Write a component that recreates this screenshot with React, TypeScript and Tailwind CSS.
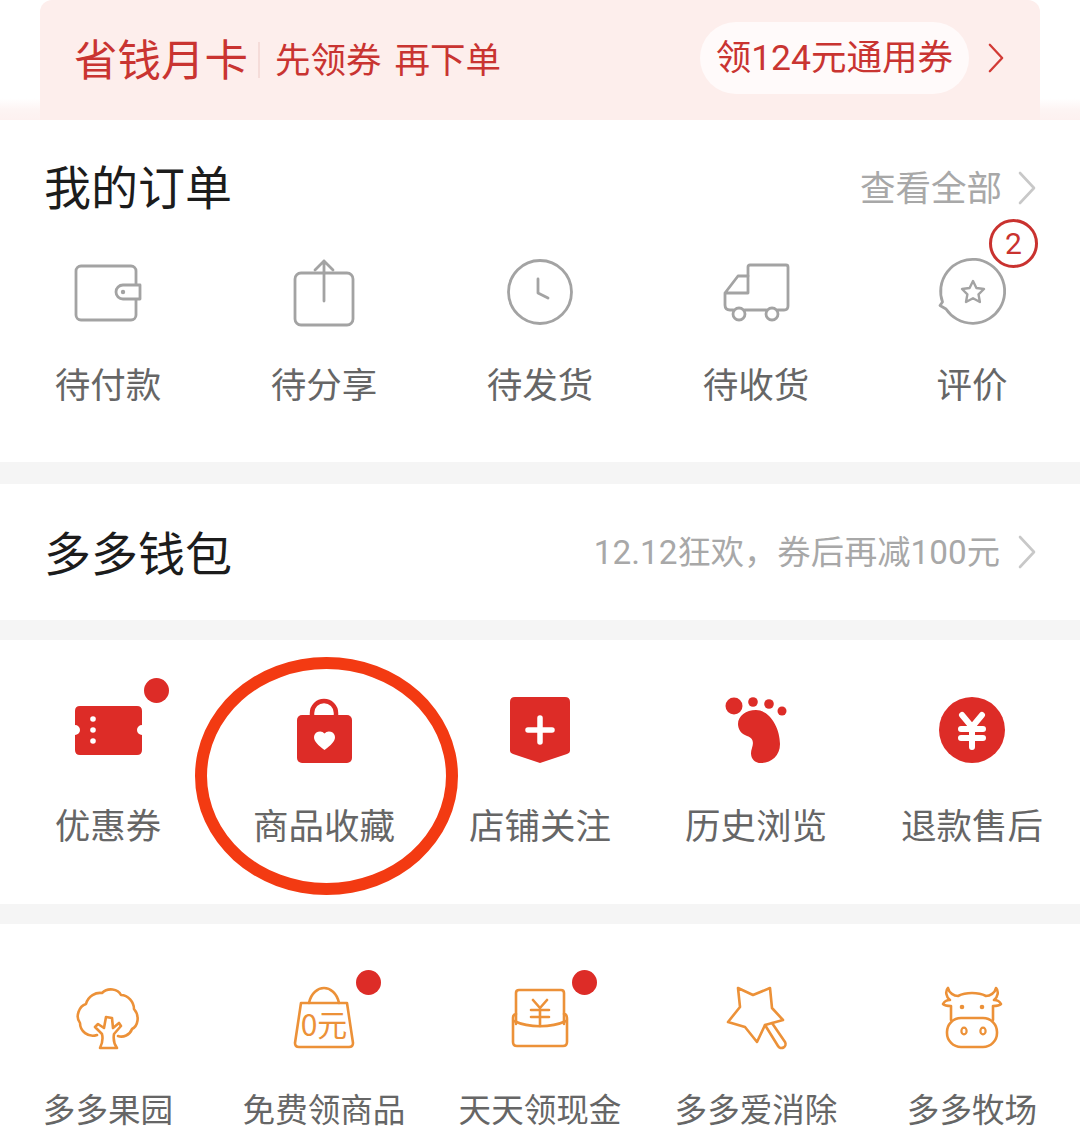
import type { ReactNode } from "react";

const grayIcon = { fill: "none", stroke: "#a3a3a3", strokeWidth: 2.8, strokeLinecap: "round", strokeLinejoin: "round" } as const;
const ORANGE = "#ec9138";
const orangeIcon = { fill: "none", stroke: ORANGE, strokeWidth: 2.6, strokeLinecap: "round", strokeLinejoin: "round" } as const;
const RED = "#dd2c27";

function Svg({ children }: { children: ReactNode }) {
  return (
    <svg viewBox="0 0 72 72" className="w-[72px] h-[72px] block overflow-visible">
      {children}
    </svg>
  );
}

const Wallet = () => (
  <Svg>
    <g {...grayIcon}>
      <rect x="4" y="10" width="60" height="54" rx="5" />
      <path d="M68 29H51a7 7 0 0 0 0 14H68Z" fill="#fff" />
    </g>
    <circle cx="51" cy="36" r="2.2" fill="#a3a3a3" />
  </Svg>
);
const Share = () => (
  <Svg>
    <g {...grayIcon}>
      <rect x="7" y="17" width="58" height="52" rx="6" />
      <path d="M36 45V5M27 14l9-9 9 9" />
    </g>
  </Svg>
);
const Clock = () => (
  <Svg>
    <g {...grayIcon}>
      <circle cx="36" cy="36" r="31.5" />
      <path d="M34 23V37L44 42" />
    </g>
  </Svg>
);
const Truck = () => (
  <Svg>
    <g {...grayIcon}>
      <path d="M28 36V11q0-2 2-2H66q2 0 2 2V50q0 4-4 4H58" />
      <path d="M28 20H18L5 37V49q0 5 5 5h3M5 37H28" />
      <path d="M25 54H46" />
      <circle cx="19" cy="58" r="6" />
      <circle cx="52" cy="58" r="6" />
    </g>
  </Svg>
);
const Review = () => (
  <Svg>
    <g {...grayIcon}>
      <path d="M6.500 46A32 32 0 1 1 10 53L4 49.500Z" />
      <path d="M37 25l3.400 7 7.600 1-5.500 5.300 1.400 7.700-6.900-3.700L30 46l1.400-7.700L26 33l7.600-1Z" strokeWidth="2.400" />
    </g>
  </Svg>
);

const Ticket = () => (
  <Svg>
    <path d="M8 12H65q5 0 5 5V31a5 5 0 0 0 0 10V56q0 5-5 5H8q-5 0-5-5V41a5 5 0 0 0 0-10V17q0-5 5-5Z" fill={RED} />
    <circle cx="21" cy="25" r="2.800" fill="#fff" />
    <circle cx="21" cy="36" r="2.800" fill="#fff" />
    <circle cx="21" cy="47" r="2.800" fill="#fff" />
  </Svg>
);
const HeartBag = () => (
  <Svg>
    <path d="M24 24V19a12 12 0 0 1 24 0V24" fill="none" stroke={RED} strokeWidth="4.500" />
    <rect x="9" y="21" width="55" height="48" rx="5" fill={RED} />
    <path d="M36.500 56C30 51 26 47.500 26 43a6 6 0 0 1 10.500-3.500A6 6 0 0 1 47 43c0 4.500-4 8-10.500 13Z" fill="#fff" />
  </Svg>
);
const Shield = () => (
  <Svg>
    <path d="M11 3H61q5 0 5 5V57q0 2-3 3L36 69 9 60q-3-1-3-3V8q0-5 5-5Z" fill={RED} />
    <path d="M36 24V48M24 36H48" stroke="#fff" strokeWidth="5.500" strokeLinecap="round" />
  </Svg>
);
const Foot = () => (
  <Svg>
    <circle cx="14" cy="12" r="8.500" fill={RED} />
    <circle cx="33" cy="8" r="4.800" fill={RED} />
    <circle cx="49" cy="10" r="4.800" fill={RED} />
    <circle cx="62" cy="17" r="4.500" fill={RED} />
    <path d="M36 16C50 16 60 34 60 50C60 62 51 69 41 69C33 69 29 62 32 54C34 48 33 44 27 42C21 40 18 35 18 30C18 22 26 16 36 16Z" fill={RED} />
  </Svg>
);
const Refund = () => (
  <Svg>
    <circle cx="36" cy="36" r="33" fill={RED} />
    <path d="M26 21L36 33L46 21M25 35H47M25 44H47M36 33V53" fill="none" stroke="#fff" strokeWidth="6" strokeLinecap="round" strokeLinejoin="round" />
  </Svg>
);

const Tree = () => (
  <Svg>
    <g {...orangeIcon}>
      <path d="M25 53C16 56 8 49 8 41C3 35 7 24 14 22C16 14 24 10 30 11C36 5 46 7 49 13C56 13 62 20 62 27C68 34 66 44 60 47C58 53 51 56 46 54" />
      <path d="M28 66C31 60 31 56 30 52L23 45L26 42L32 46L34 35L40 36L41 46L47 41L49 44L42 52C41 58 42 62 45 66Z" />
    </g>
  </Svg>
);
const ZeroBag = () => (
  <Svg>
    <g {...orangeIcon}>
      <path d="M13 21H59L65 61q0 4-4 4H11q-4 0-4-4Z" />
      <path d="M21 21C23 11 30 6 36 6C42 6 49 11 51 21" />
    </g>
    <text x="36" y="54" textAnchor="middle" fontSize="30" fill={ORANGE} className="font-['Noto_Sans_CJK_SC',sans-serif]">
      0元
    </text>
  </Svg>
);
const Cash = () => (
  <Svg>
    <g {...orangeIcon}>
      <path d="M12 42V11q0-3 3-3H57q3 0 3 3V42" />
      <path d="M12 32C9 32 9 35 9 37V60q0 4 4 4H59q4 0 4-4V37C63 35 63 32 60 32" />
      <path d="M10 39C25 46 47 46 62 39" />
      <path d="M29 18L36 26L43 18M27 28H45M27 35H45M36 26V44" />
    </g>
  </Svg>
);
const Wand = () => (
  <Svg>
    <g {...orangeIcon}>
      <path d="M18 6L33 13L50 6L52 26L63 38L45 43L37 60L25 45L8 40L20 25Z" />
      <path d="M45 43L58 64a3.500 3.500 0 0 0 7-4L52 41" />
    </g>
  </Svg>
);
const Cow = () => (
  <Svg>
    <g {...orangeIcon}>
      <rect x="11" y="36" width="50" height="29" rx="14" />
      <path d="M15 38V24C12 24 9 24 7 22C8 20 10 18 14 18C10 15 9 9 12 6C13 11 18 14 22 14C30 10 42 10 50 14C54 14 59 11 60 6C63 9 62 15 58 18C62 18 64 20 65 22C63 24 60 24 57 24V38" />
      <ellipse cx="28" cy="49" rx="2.600" ry="3.400" strokeWidth="2.200" />
      <ellipse cx="47" cy="49" rx="2.600" ry="3.400" strokeWidth="2.200" />
    </g>
    <circle cx="26" cy="25" r="2.300" fill={ORANGE} />
    <circle cx="46" cy="25" r="2.300" fill={ORANGE} />
  </Svg>
);

const Chevron = ({ color = "#c8c8c8", className = "w-[18px] h-[34px]" }: { color?: string; className?: string }) => (
  <svg viewBox="0 0 18 34" className={className} fill="none" stroke={color} strokeWidth="2.600" strokeLinecap="round" strokeLinejoin="round">
    <path d="M2 2L16 17L2 32" />
  </svg>
);

const Dot = () => <span className="absolute left-[68px] top-[-12px] w-[25px] h-[25px] rounded-full bg-[#dd2c27]" />;

function Cell({ icon, label, badge, labelClass }: { icon: ReactNode; label: string; badge?: ReactNode; labelClass: string }) {
  return (
    <div className="flex flex-col items-center">
      <div className="relative w-[72px] h-[72px]">
        {icon}
        {badge}
      </div>
      <div className={labelClass}>{label}</div>
    </div>
  );
}

const ORDER_LABEL = "mt-[34px] h-[48px] leading-[48px] text-[35.500px] text-[#666] whitespace-nowrap";
const TOOL_LABEL = "mt-[37px] h-[48px] leading-[48px] text-[35.500px] text-[#666] whitespace-nowrap";
const GAME_LABEL = "mt-[35px] h-[44px] leading-[44px] text-[32.600px] text-[#666] whitespace-nowrap";

export default function App() {
  return (
    <div className="relative w-[1080px] h-[1138px] overflow-hidden bg-[#f5f5f5] font-['Roboto','Noto_Sans_CJK_SC','Liberation_Sans',sans-serif]">
      {/* Banner */}
      <div className="h-[120px] px-[40px] bg-[linear-gradient(to_bottom,#ffffff_82%,#fdf4f3_92%,#fdf1f0_100%)]">
        <div className="h-full rounded-t-[12px] bg-[#fdeeec] flex items-center pl-[34px] pr-[36px] text-[#c93431]">
          <span className="mt-[3px] text-[43.500px] leading-none whitespace-nowrap">省钱月卡</span>
          <span className="w-[2px] h-[36px] bg-[#f5dcd9] ml-[10px] mr-[15px]" />
          <span className="mt-[3px] flex gap-[13px] text-[35.500px] leading-none whitespace-nowrap">
            <span>先领券</span>
            <span>再下单</span>
          </span>
          <span className="ml-auto flex items-center gap-[19px] mb-[4px]">
            <span className="h-[72px] pt-[2px] px-[16px] rounded-full bg-[#fffafa] flex items-center text-[35.500px] whitespace-nowrap">
              领124元通用券
            </span>
            <Chevron color="#d23a35" className="w-[16px] h-[30px]" />
          </span>
        </div>
      </div>

      {/* Orders */}
      <section className="h-[342px] bg-white">
        <div className="pt-[39px] h-[99px] pl-[44px] pr-[44px] flex items-center justify-between">
          <span className="text-[47px] leading-[60px] text-[#1c1c1c]">我的订单</span>
          <span className="flex items-center gap-[16px]">
            <span className="text-[35.500px] leading-[60px] text-[#a8a8a8]">查看全部</span>
            <Chevron className="w-[18px] h-[34px] -mt-[2px]" />
          </span>
        </div>
        <div className="mt-[37px] grid grid-cols-5">
          <Cell icon={<Wallet />} label="待付款" labelClass={ORDER_LABEL} />
          <Cell icon={<Share />} label="待分享" labelClass={ORDER_LABEL} />
          <Cell icon={<Clock />} label="待发货" labelClass={ORDER_LABEL} />
          <Cell icon={<Truck />} label="待收货" labelClass={ORDER_LABEL} />
          <Cell
            icon={<Review />}
            label="评价"
            labelClass={ORDER_LABEL}
            badge={
              <span className="absolute left-[53px] top-[-37px] w-[49px] h-[49px] rounded-full border-[3.500px] border-[#c9322f] bg-white flex items-center justify-center text-[30px] leading-none text-[#c9322f]">
                2
              </span>
            }
          />
        </div>
      </section>

      {/* Wallet */}
      <section className="mt-[22px] h-[136px] bg-white pl-[44px] pr-[44px] flex items-center justify-between">
        <span className="pt-[5px] text-[47px] leading-[60px] text-[#1c1c1c]">多多钱包</span>
        <span className="flex items-center gap-[18px]">
          <span className="pt-[2px] text-[33.300px] leading-[60px] text-[#a8a8a8] whitespace-nowrap">12.12狂欢，券后再减100元</span>
          <Chevron />
        </span>
      </section>

      {/* Tools */}
      <section className="mt-[20px] h-[264px] bg-white pt-[54px] grid grid-cols-5 content-start">
        <Cell
          icon={<Ticket />}
          label="优惠券"
          labelClass={TOOL_LABEL}
          badge={<span className="absolute left-[72px] top-[-16px] w-[25px] h-[25px] rounded-full bg-[#dd2c27]" />}
        />
        <Cell icon={<HeartBag />} label="商品收藏" labelClass={TOOL_LABEL} />
        <Cell icon={<Shield />} label="店铺关注" labelClass={TOOL_LABEL} />
        <Cell icon={<Foot />} label="历史浏览" labelClass={TOOL_LABEL} />
        <Cell icon={<Refund />} label="退款售后" labelClass={TOOL_LABEL} />
      </section>

      {/* Games */}
      <section className="mt-[20px] h-[214px] bg-white pt-[58px] grid grid-cols-5 content-start">
        <Cell icon={<Tree />} label="多多果园" labelClass={GAME_LABEL} />
        <Cell icon={<ZeroBag />} label="免费领商品" labelClass={GAME_LABEL} badge={<Dot />} />
        <Cell icon={<Cash />} label="天天领现金" labelClass={GAME_LABEL} badge={<Dot />} />
        <Cell icon={<Wand />} label="多多爱消除" labelClass={GAME_LABEL} />
        <Cell icon={<Cow />} label="多多牧场" labelClass={GAME_LABEL} />
      </section>

      {/* Hand-drawn annotation circle */}
      <div className="absolute left-[195px] top-[657px] w-[263px] h-[238px] rounded-[50%] border-[12px] border-[#f33a12]" />
    </div>
  );
}
